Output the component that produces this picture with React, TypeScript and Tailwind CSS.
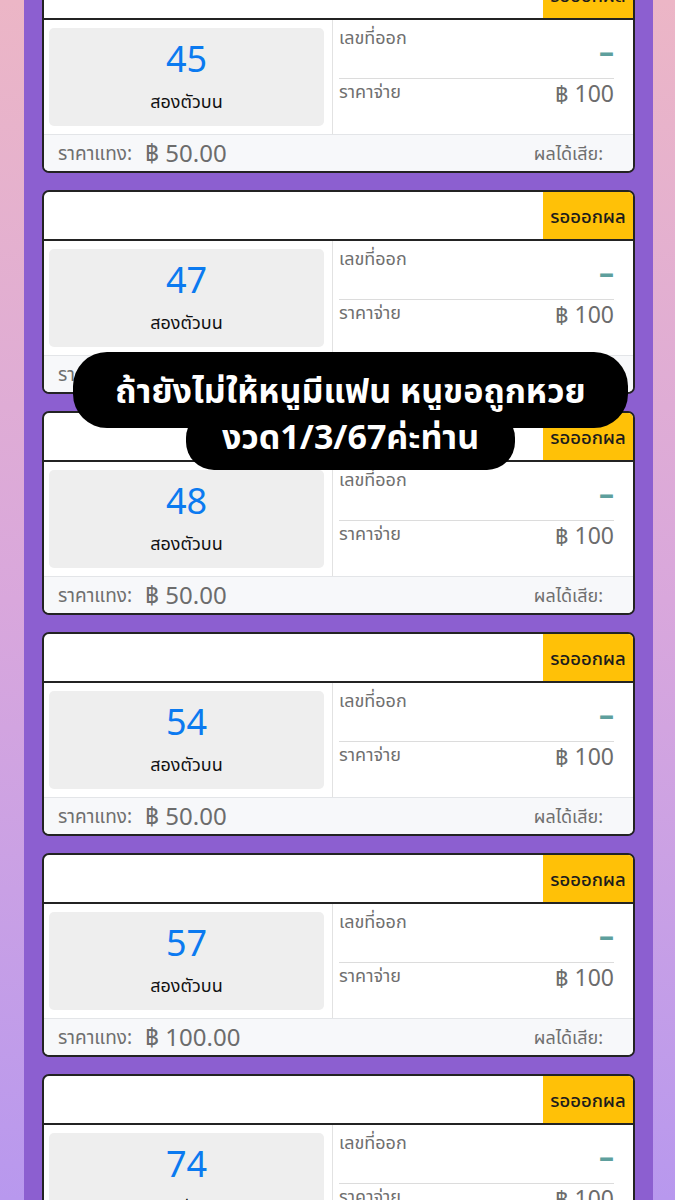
import React from 'react';

type Bet = {
  num: string;
  stake: string;
};

const bets: Bet[] = [
  { num: '45', stake: '50.00' },
  { num: '47', stake: '50.00' },
  { num: '48', stake: '50.00' },
  { num: '54', stake: '50.00' },
  { num: '57', stake: '100.00' },
  { num: '74', stake: '50.00' },
];

const font = { fontFamily: '"Noto Sans", "Noto Sans Thai", "Liberation Sans", sans-serif' };

const BetCard: React.FC<{ bet: Bet }> = ({ bet }) => (
  <div className="shrink-0 border-2 border-[#232323] rounded-[7px] overflow-hidden bg-white">
    {/* header */}
    <div className="h-[49px] flex justify-end border-b-2 border-[#232323]">
      <div className="w-[90px] bg-[#ffc107] flex items-center justify-center text-[18.5px] font-medium text-[#1c1c1c]">
        รอออกผล
      </div>
    </div>

    {/* body */}
    <div className="h-[114px] flex">
      <div className="w-[288px] pl-[5px] pr-[8px] py-[8px]">
        <div className="h-full bg-[#eeeeee] rounded-[5px] flex flex-col items-center">
          <div className="mt-[9px] text-[36px] leading-[44px] text-[#0b7af0]">{bet.num}</div>
          <div className="mt-[8px] text-[18px] leading-[24px] text-[#111]">สองตัวบน</div>
        </div>
      </div>
      <div className="flex-1 border-l border-[#e2e2e2] pl-[6px] pr-[19px] flex flex-col">
        <div className="h-[59px] border-b border-[#dcdcdc]">
          <div className="pt-[5px] text-[18px] leading-[24px] text-[#6f6f6f]">เลขที่ออก</div>
          <div className="flex justify-end -mt-[12px] text-[30px] font-bold leading-[30px] text-[#5e9f9d]">–</div>
        </div>
        <div className="flex justify-between">
          <div className="text-[18px] leading-[24px] text-[#6f6f6f]">ราคาจ่าย</div>
          <div className="-mt-[1px] text-[23px] leading-[30px] text-[#6c6c6c]">฿ 100</div>
        </div>
      </div>
    </div>

    {/* footer */}
    <div className="h-[37px] bg-[#f7f8fa] border-t border-[#e3e5e8] flex items-center pl-[14px] pr-[30px]">
      <span className="text-[19px] text-[#6f6f6f]">ราคาแทง:</span>
      <span className="ml-[13px] text-[24px] text-[#6c6c6c]">฿ {bet.stake}</span>
      <span className="ml-auto text-[18px] text-[#6f6f6f]">ผลได้เสีย:</span>
    </div>
  </div>
);

const App: React.FC = () => {
  return (
    <div
      className="relative w-[675px] h-[1200px] overflow-hidden bg-gradient-to-b from-[#ecb6c6] via-[#d9a7dc] to-[#b898ee] pl-[24px] pr-[22px]"
      style={font}
    >
      <div className="h-full bg-[#8c5fd0] px-[18px] flex flex-col">
        <div className="flex flex-col gap-[17px] -mt-[31px]">
          {bets.map((b) => (
            <BetCard key={b.num} bet={b} />
          ))}
        </div>
      </div>

      {/* caption overlay */}
      <div className="absolute top-[352px] left-[26px] right-0 flex flex-col items-center font-bold text-white">
        <div className="h-[76px] bg-black rounded-[34px] px-[42px] flex items-center text-[34px] leading-none">
          ถ้ายังไม่ให้หนูมีแฟน หนูขอถูกหวย
        </div>
        <div className="-mt-[18px] h-[60px] bg-black rounded-[28px] px-[36px] flex items-center pb-[8px] text-[34px] leading-none">
          งวด1/3/67ค่ะท่าน
        </div>
      </div>
    </div>
  );
};

export default App;
